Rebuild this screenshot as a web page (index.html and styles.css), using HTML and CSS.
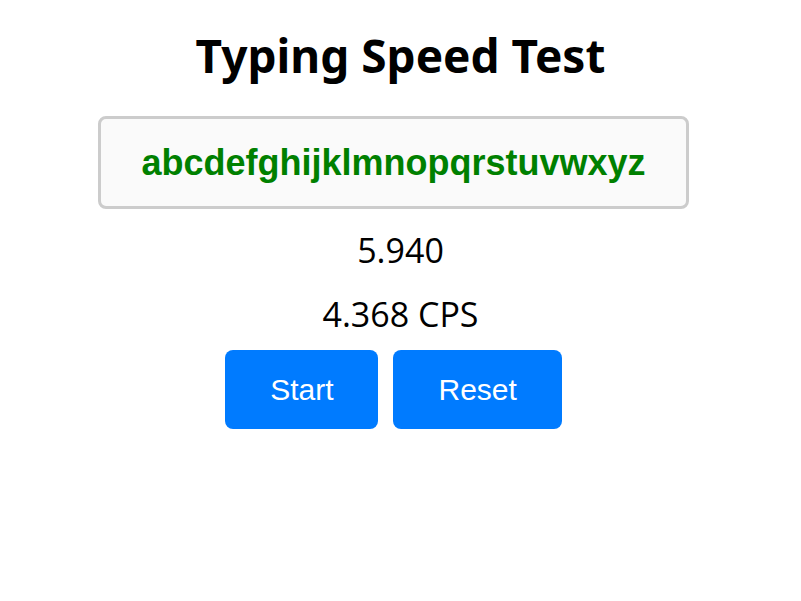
FILE: index.html
```html
<!DOCTYPE html>
<html lang="en">
<head>
<meta charset="utf-8">
<title>Typing Speed Test</title>
<link rel="stylesheet" href="styles.css">
</head>
<body>
<main class="test">
<h1 class="title">Typing Speed Test</h1>
<div class="panel">
<p class="letters">abcdefghijklmnopqrstuvwxyz</p>
</div>
<p class="stat">5.940</p>
<p class="stat">4.368 CPS</p>
<div class="actions">
<button class="button" type="button">Start</button>
<button class="button" type="button">Reset</button>
</div>
</main>
</body>
</html>
```

FILE: styles.css
```css
body {
  margin: 0;
  background: #fff;
  color: #000;
  font-family: "Segoe UI", "Open Sans", "Noto Sans", sans-serif;
}

.test {
  display: flex;
  flex-direction: column;
  align-items: center;
  padding-top: 24px;
}

.title {
  margin: 0 0 30px;
  font-family: "Segoe UI", "Noto Sans", sans-serif;
  font-size: 46px;
  line-height: 62px;
  font-weight: 700;
}

.panel {
  margin-right: 14px;
  padding: 20px 40px;
  border: 3px solid #ccc;
  border-radius: 8px;
  background: #fafafa;
}

.letters {
  margin: 0;
  color: green;
  font-family: "Liberation Sans", Arial, sans-serif;
  font-size: 36px;
  line-height: 47px;
  font-weight: 700;
}

.stat {
  margin: 18px 0 0;
  font-size: 34px;
  line-height: 46px;
}

.actions {
  display: flex;
  gap: 15px;
  margin: 13px 14px 0 0;
}

.button {
  padding: 22px 45px;
  border: 0;
  border-radius: 8px;
  background: #007bff;
  color: #fff;
  font-family: "Liberation Sans", Arial, sans-serif;
  font-size: 30px;
  line-height: 35px;
  cursor: pointer;
}
```
